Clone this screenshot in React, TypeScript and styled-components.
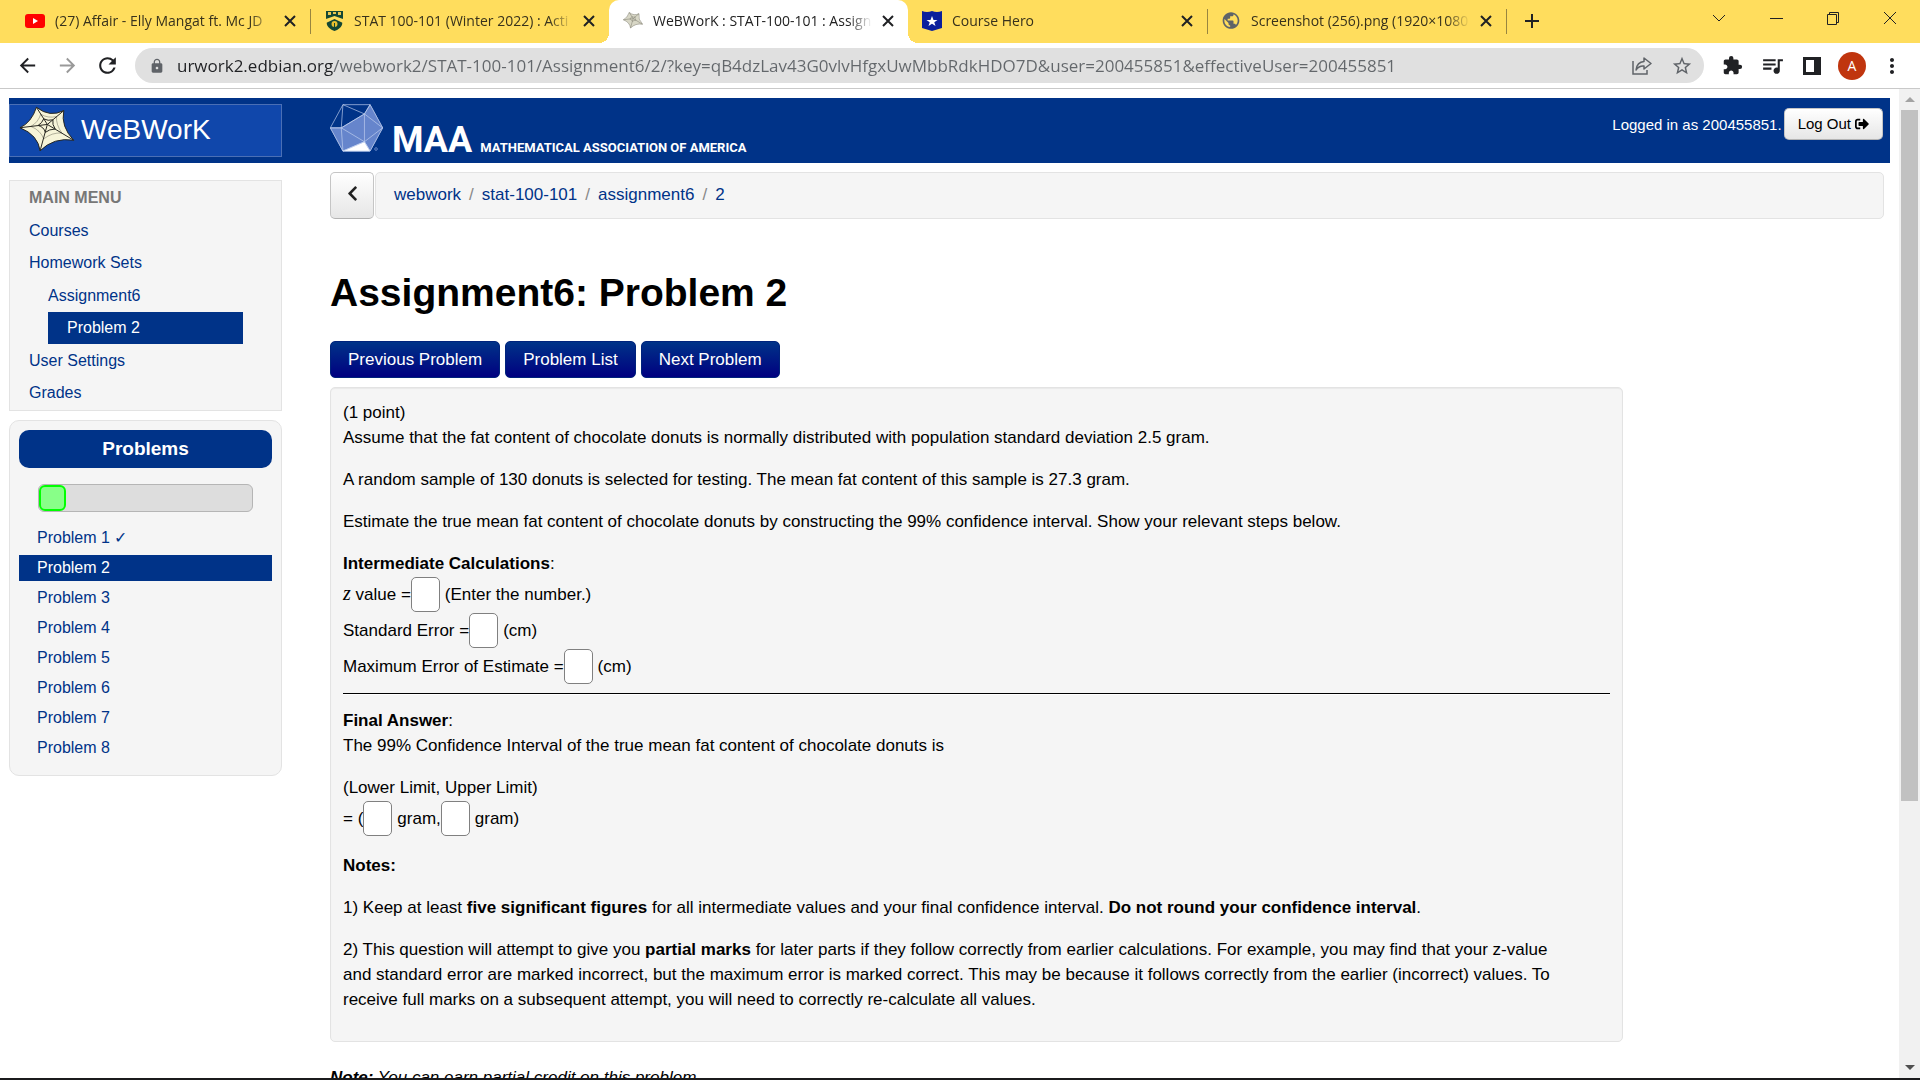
import React from "react";
import styled, { createGlobalStyle, css } from "styled-components";
import {
  MdArrowBack,
  MdArrowForward,
  MdRefresh,
  MdLock,
  MdStarBorder,
  MdExtension,
  MdQueueMusic,
  MdMoreVert,
  MdPublic,
  MdAdd,
} from "react-icons/md";
import { FaChevronLeft, FaSignOutAlt } from "react-icons/fa";

const uiFont = `"Open Sans", "Noto Sans", sans-serif`;
const pageFont = `"Liberation Sans", Arial, sans-serif`;
const navy = "#003388";

const GlobalStyle = createGlobalStyle`
  *, *::before, *::after { box-sizing: border-box; }
  body { margin: 0; background: #fff; }
  button, input { font: inherit; margin: 0; }
  a { color: ${navy}; text-decoration: none; }
  ul, ol { list-style: none; margin: 0; padding: 0; }
`;

const Window = styled.div`
  display: flex;
  flex-direction: column;
  height: 100vh;
  overflow: hidden;
  border-bottom: 2px solid #1b1b1d;
  font-family: ${pageFont};
  color: #000;
`;

/* ---------- browser chrome ---------- */

const TabStrip = styled.div`
  display: flex;
  align-items: stretch;
  height: 43px;
  flex: none;
  padding-left: 11px;
  background: #ffdd5d;
  font: 14px/20px ${uiFont};
`;

const Tab = styled.div<{ $active?: boolean; $divider?: boolean }>`
  position: relative;
  display: flex;
  align-items: center;
  flex: 0 1 299px;
  min-width: 0;
  padding: 0 10px 2px 14px;
  color: #38321c;
  ${(p) =>
    p.$divider &&
    css`
      &::after {
        content: "";
        position: absolute;
        right: -1px;
        top: 9px;
        height: 25px;
        width: 1px;
        background: #98853f;
      }
    `}
  ${(p) =>
    p.$active &&
    css`
      background: #fff;
      color: #222;
      border-radius: 10px 10px 0 0;
      &::before,
      &::after {
        content: "";
        position: absolute;
        bottom: 0;
        width: 10px;
        height: 10px;
      }
      &::before {
        left: -10px;
        background: radial-gradient(circle at 0 0, transparent 10px, #fff 10px);
      }
      &::after {
        right: -10px;
        background: radial-gradient(circle at 100% 0, transparent 10px, #fff 10px);
      }
    `}
`;

const TabIcon = styled.span`
  display: flex;
  justify-content: center;
  width: 20px;
  flex: none;
`;

const TabTitle = styled.span`
  flex: 1;
  min-width: 0;
  margin: 0 6px 0 10px;
  overflow: hidden;
  white-space: nowrap;
  mask-image: linear-gradient(90deg, #000 calc(100% - 24px), transparent);
`;

const IconButton = styled.button<{ $size?: number; $color?: string }>`
  display: flex;
  align-items: center;
  justify-content: center;
  flex: none;
  width: ${(p) => p.$size ?? 40}px;
  height: ${(p) => p.$size ?? 40}px;
  padding: 0;
  border: 0;
  background: none;
  color: ${(p) => p.$color ?? "#202124"};
`;

const NewTab = styled(IconButton)`
  margin: 1px 0 0 6px;
`;

const WindowControls = styled.div`
  display: flex;
  margin-left: auto;
  padding-right: 2px;
  height: 36px;
  button {
    width: 57px;
    height: 36px;
  }
`;

const Toolbar = styled.div`
  display: flex;
  align-items: center;
  flex: none;
  height: 46px;
  padding: 0 8px 0 7px;
  border-bottom: 1px solid #c9c9c9;
  background: #fff;
`;

const AddressBar = styled.div`
  display: flex;
  align-items: center;
  flex: 1;
  min-width: 0;
  height: 35px;
  margin: 0 8px;
  padding: 0 2px 0 14px;
  border-radius: 18px;
  background: #e0e0e0;
  color: #5f6368;
`;

const Address = styled.input`
  flex: 1;
  min-width: 0;
  height: 28px;
  margin-left: 12px;
  padding: 0;
  border: 0;
  outline: 0;
  font: 17px/28px ${uiFont};
  color: #5f6368;
  background: linear-gradient(90deg, #202124 156px, #63676b 156px);
  background-clip: text;
  -webkit-background-clip: text;
  -webkit-text-fill-color: transparent;
`;

const Avatar = styled.button`
  width: 28px;
  height: 28px;
  margin: 0 6px;
  padding: 0;
  border: 0;
  border-radius: 50%;
  background: #c0350e;
  color: #fff;
  font: 14px/28px ${uiFont};
`;

/* ---------- scrolled page ---------- */

const Viewport = styled.div`
  display: flex;
  flex: 1;
  min-height: 0;
`;

const Page = styled.div`
  flex: 1;
  min-width: 0;
  overflow: hidden;
  padding: 9px 9px 0;
`;

const Scrollbar = styled.div`
  display: flex;
  flex-direction: column;
  align-items: center;
  flex: none;
  width: 21px;
  background: #f1f1f1;
`;

const ScrollArrow = styled.button`
  display: flex;
  align-items: center;
  justify-content: center;
  flex: none;
  width: 21px;
  height: 21px;
  padding: 0;
  border: 0;
  background: none;
`;

const ScrollTrack = styled.div`
  flex: 1;
  width: 17px;
`;

const ScrollThumb = styled.div`
  height: 73%;
  background: #c1c1c1;
`;

const Masthead = styled.header`
  display: flex;
  align-items: flex-start;
  height: 65px;
  padding: 6px 7px 6px 0;
  background: ${navy};
  color: #fff;
`;

const Brand = styled.a`
  display: flex;
  align-items: center;
  gap: 6px;
  flex: none;
  width: 273px;
  height: 53px;
  padding: 0 0 2px 9px;
  border: 1px solid #4a6fb5;
  background: #1047ab;
  color: #fff;
  font-size: 28px;
  line-height: 32px;
`;

const Association = styled.a`
  display: flex;
  align-items: baseline;
  margin-left: 48px;
  color: #fff;
  font-family: Roboto, ${pageFont};
  font-weight: 700;
  line-height: 1;
  white-space: nowrap;
`;

const Acronym = styled.span`
  margin-left: 9px;
  font-size: 36px;
`;

const FullName = styled.span`
  margin-left: 8px;
  font-size: 13px;
`;

const Session = styled.div`
  display: flex;
  align-items: flex-start;
  margin: 4px 0 0 auto;
  font-size: 15px;
  line-height: 34px;
`;

const raised = css`
  border: 1px solid #c5c5c5;
  border-bottom-color: #b3b3b3;
  border-radius: 5px;
  background: linear-gradient(#fff, #e6e6e6);
  color: #222;
`;

const LogOut = styled.button`
  ${raised}
  display: flex;
  align-items: center;
  gap: 4px;
  height: 32px;
  margin-left: 2px;
  padding: 0 13px;
  font-size: 15px;
  color: #000;
`;

const Columns = styled.div`
  display: flex;
  align-items: flex-start;
  gap: 48px;
`;

const Sidebar = styled.div`
  display: flex;
  flex-direction: column;
  gap: 9px;
  flex: none;
  width: 273px;
  padding-top: 17px;
  font-size: 16px;
`;

const panel = css`
  border: 1px solid #e3e3e3;
  background: #f5f5f5;
`;

const MainMenu = styled.nav`
  ${panel}
  padding: 0 38px 1px 19px;
  line-height: 32px;
  ul ul {
    margin: 1px 0;
    padding-left: 19px;
  }
`;

const MenuHeading = styled.h2`
  margin: 0;
  font-size: 16px;
  line-height: 34px;
  color: #777;
`;

const MenuLink = styled.a<{ $current?: boolean }>`
  display: block;
  ${(p) =>
    p.$current &&
    css`
      padding-left: 19px;
      background: ${navy};
      color: #fff;
    `}
`;

const Problems = styled.nav`
  ${panel}
  padding: 9px 9px 14px;
  border-radius: 10px;
`;

const ProblemsHeading = styled.h2`
  margin: 0;
  border-radius: 10px;
  background: ${navy};
  color: #fff;
  font-size: 19px;
  line-height: 38px;
  text-align: center;
`;

const Progress = styled.div`
  height: 28px;
  margin: 16px 19px 13px;
  border: 1px solid #b5b5b5;
  border-radius: 6px;
  background: #ddd;
`;

const ProgressDone = styled.div`
  height: 26px;
  border: 2px solid #0f0;
  border-radius: 6px;
  background: #8f8;
`;

const ProblemList = styled.ol`
  display: flex;
  flex-direction: column;
  gap: 4px;
`;

const ProblemLink = styled.a<{ $current?: boolean }>`
  display: block;
  padding-left: 18px;
  line-height: 26px;
  background: ${(p) => (p.$current ? navy : "transparent")};
  color: ${(p) => (p.$current ? "#fff" : navy)};
`;

const Main = styled.main`
  flex: 1;
  min-width: 0;
  padding: 9px 6px 0 0;
  font-size: 17px;
  line-height: 25px;
`;

const PathRow = styled.div`
  display: flex;
  gap: 1px;
  height: 47px;
`;

const UpButton = styled.button`
  ${raised}
  display: flex;
  align-items: center;
  justify-content: center;
  width: 44px;
  padding: 0 0 4px;
`;

const Breadcrumb = styled.nav`
  ${panel}
  display: flex;
  flex: 1;
  gap: 8px;
  padding: 9px 18px;
  border-radius: 5px;
  span {
    color: #888;
  }
`;

const Title = styled.h1`
  margin: 49px 0 23px;
  font-size: 39px;
  line-height: 50px;
`;

const Buttons = styled.div`
  display: flex;
  gap: 5px;
`;

const NavButton = styled.button`
  height: 37px;
  padding: 0 17px;
  border: 1px solid #00237c;
  border-radius: 5px;
  background: linear-gradient(#003388, #000080);
  color: #fff;
`;

const Well = styled.section`
  ${panel}
  width: 83.2%;
  margin-top: 9px;
  padding: 12px 12px 29px;
  border-radius: 5px;
  box-shadow: inset 0 1px 1px rgba(0, 0, 0, 0.05);
`;

const Paragraph = styled.p<{ $tight?: boolean }>`
  margin: 0 0 ${(p) => (p.$tight ? 0 : 17)}px;
`;

const AnswerRow = styled.div`
  display: flex;
  align-items: center;
  height: 36px;
  white-space: pre;
`;

const Answer = styled.input`
  width: 29px;
  height: 35px;
  margin-right: 5px;
  padding: 0 4px;
  border: 1px solid #808080;
  border-radius: 5px;
  background: #fff;
`;

const MathVar = styled.i`
  font-family: "Liberation Serif", serif;
  font-size: 20px;
  line-height: 25px;
`;

const Rule = styled.hr`
  margin: 9px 0 13px;
  border: 0;
  border-top: 1px solid #000;
  border-bottom: 1px solid #fff;
`;

const Notes = styled.div`
  margin-top: 17px;
`;

const Credit = styled.p`
  margin: 23px 0 0;
  font-style: italic;
`;

/* ---------- drawings ---------- */

const WebStar = ({ width, faded }: { width: number; faded?: boolean }) => {
  const ink = faded ? "#8a897c" : "#26261f";
  return (
    <svg width={width} viewBox="54 54 170 140" fill="none" stroke={ink} strokeWidth={faded ? 5 : 3}>
      <path
        d="M57 120Q92 104 107 58Q148 90 190 68Q180 116 220 158Q160 148 118 190Q112 142 57 120Z"
        fill={faded ? "#d8d7c6" : "#f6f4d8"}
      />
      <path d="M57 120L140 110M107 58L140 110M190 68L140 110M220 158L140 110M118 190L140 110" />
      <path d="M112 113Q124 106 129 93Q142 100 157 96Q154 110 164 124Q146 124 134 134Q130 118 112 113Z" />
      {!faded && (
        <path
          d="M90 116Q112 104 120 79Q142 92 168 86Q166 110 184 136Q154 134 129 154Q120 128 90 116Z"
          strokeWidth="1"
        />
      )}
    </svg>
  );
};

const Icosahedron = () => (
  <svg width="53" height="48" viewBox="59 40 160 145" stroke="#c3d2f0" strokeWidth="2" strokeLinejoin="round">
    <path d="M60 112L98 42H180L218 112L180 182H98Z" fill={navy} />
    <path d="M60 112H93L163 70L180 42L218 112L180 182H98Z" fill="#6685cc" />
    <path d="M98 182L163 154L180 182Z" fill="#fff" />
    <path
      d="M93 112L163 70V154ZM98 42L93 112L98 182L163 154L218 112L163 70L98 42M180 42L163 70M60 112H93M163 154L180 182"
      fill="none"
    />
    <circle cx="198" cy="176" r="4" fill="none" stroke="#8ea6dc" />
  </svg>
);

const YouTubeIcon = () => (
  <svg width="20" height="14" viewBox="0 0 20 14">
    <rect width="20" height="14" rx="3" fill="#f00" />
    <path d="M8 4L13 7L8 10Z" fill="#fff" />
  </svg>
);

const CrestIcon = () => (
  <svg width="17" height="20" viewBox="0 0 17 20">
    <path d="M0 0H17V7L16 14Q14 18 8.500 20Q3 18 1 14L0 7Z" fill="#154734" />
    <path d="M0 8L8.500 5L17 8V12L8.500 8L0 12Z" fill="#ffdd5d" />
    <path d="M2 1H5V4H2ZM7 1H10V3H7ZM12 1H15V4H12Z" fill="#e9c650" />
    <circle cx="8.500" cy="13" r="3" fill="#e9c030" />
    <path d="M8.500 12V18" stroke="#154734" strokeWidth="1" />
  </svg>
);

const ShieldStarIcon = () => (
  <svg width="20" height="20" viewBox="0 0 20 20">
    <path d="M0 0Q5 2 10 0Q15 2 20 0V17L10 20L0 17Z" fill="#0a1f9c" />
    <path d="M10 5L11.5 9H15.5L12.3 11.3L13.5 15L10 12.8L6.500 15L7.700 11.300L4.500 9H8.500Z" fill="#fff" />
  </svg>
);

const stroke = { fill: "none", stroke: "currentColor" } as const;

const ShareIcon = () => (
  <svg width="20" height="18" viewBox="0 0 20 18" {...stroke} strokeWidth="1.500">
    <path d="M1 4V17H15V13" />
    <path d="M12 1L19 6.500L12 12V9Q7 8.500 4 13Q5 5 12 4.500Z" strokeLinejoin="round" />
  </svg>
);

const SidePanelIcon = () => (
  <svg width="18" height="18" viewBox="0 0 18 18">
    <path d="M0 0H18V18H0Z" fill="currentColor" />
    <path d="M3 3H11V15H3Z" fill="#fff" />
  </svg>
);

const CrossIcon = () => (
  <svg width="12" height="12" viewBox="0 0 12 12" {...stroke} strokeWidth="2">
    <path d="M1 1L11 11M11 1L1 11" />
  </svg>
);

const Glyph = ({ d }: { d: string }) => (
  <svg width="14" height="14" viewBox="0 0 14 14" {...stroke} strokeWidth="1">
    <path d={d} />
  </svg>
);

const Triangle = ({ up }: { up?: boolean }) => (
  <svg width="10" height="5" viewBox="0 0 10 5">
    <path d={up ? "M0 5L5 0L10 5Z" : "M0 0L5 5L10 0Z"} fill={up ? "#a3a3a3" : "#505050"} />
  </svg>
);

/* ---------- content ---------- */

const tabs = [
  { title: "(27) Affair - Elly Mangat ft. Mc JD", icon: <YouTubeIcon />, divider: true },
  { title: "STAT 100-101 (Winter 2022) : Acti", icon: <CrestIcon /> },
  { title: "WeBWorK : STAT-100-101 : Assign", icon: <WebStar width={20} faded />, active: true },
  { title: "Course Hero", icon: <ShieldStarIcon />, divider: true },
  { title: "Screenshot (256).png (1920×1080", icon: <MdPublic size={21} color="#5f6368" />, divider: true },
];

const controls = [
  { label: "Search tabs", d: "M1 4L7 10L13 4" },
  { label: "Minimize", d: "M1 7.500H14" },
  { label: "Restore", d: "M1.500 3.500H10.500V13.500H1.500ZM3.500 3.500V1.500H12.500V11.500H10.500" },
  { label: "Close", d: "M1 1L13 13M13 1L1 13" },
];

const crumbs = ["webwork", "stat-100-101", "assignment6", "2"];

export default function App() {
  return (
    <>
      <GlobalStyle />
      <Window>
        <TabStrip>
          {tabs.map((t) => (
            <Tab key={t.title} $active={t.active} $divider={t.divider}>
              <TabIcon>{t.icon}</TabIcon>
              <TabTitle>{t.title}</TabTitle>
              <IconButton $size={20} aria-label="Close tab">
                <CrossIcon />
              </IconButton>
            </Tab>
          ))}
          <NewTab aria-label="New tab">
            <MdAdd size={24} />
          </NewTab>
          <WindowControls>
            {controls.map((c) => (
              <IconButton key={c.label} aria-label={c.label}>
                <Glyph d={c.d} />
              </IconButton>
            ))}
          </WindowControls>
        </TabStrip>

        <Toolbar>
          <IconButton aria-label="Back"><MdArrowBack size={23} /></IconButton>
          <IconButton aria-label="Forward" $color="#999"><MdArrowForward size={23} /></IconButton>
          <IconButton aria-label="Reload"><MdRefresh size={25} /></IconButton>
          <AddressBar>
            <MdLock size={16} />
            <Address
              aria-label="Address"
              readOnly
              value="urwork2.edbian.org/webwork2/STAT-100-101/Assignment6/2/?key=qB4dzLav43G0vlvHfgxUwMbbRdkHDO7D&user=200455851&effectiveUser=200455851"
            />
            <IconButton aria-label="Share" $color="#5f6368"><ShareIcon /></IconButton>
            <IconButton aria-label="Bookmark" $color="#5f6368"><MdStarBorder size={22} /></IconButton>
          </AddressBar>
          <IconButton aria-label="Extensions"><MdExtension size={21} /></IconButton>
          <IconButton aria-label="Media"><MdQueueMusic size={25} /></IconButton>
          <IconButton aria-label="Side panel"><SidePanelIcon /></IconButton>
          <Avatar>A</Avatar>
          <IconButton aria-label="Menu"><MdMoreVert size={24} /></IconButton>
        </Toolbar>

        <Viewport>
          <Page>
            <Masthead>
              <Brand href="#">
                <WebStar width={56} />
                WeBWorK
              </Brand>
              <Association href="#">
                <Icosahedron />
                <Acronym>MAA</Acronym>
                <FullName>MATHEMATICAL ASSOCIATION OF AMERICA</FullName>
              </Association>
              <Session>
                Logged in as 200455851.
                <LogOut>
                  Log Out
                  <FaSignOutAlt size={14} />
                </LogOut>
              </Session>
            </Masthead>

            <Columns>
              <Sidebar>
                <MainMenu>
                  <MenuHeading>MAIN MENU</MenuHeading>
                  <ul>
                    <li><MenuLink href="#">Courses</MenuLink></li>
                    <li>
                      <MenuLink href="#">Homework Sets</MenuLink>
                      <ul>
                        <li><MenuLink href="#">Assignment6</MenuLink></li>
                        <li><MenuLink href="#" $current>Problem 2</MenuLink></li>
                      </ul>
                    </li>
                    <li><MenuLink href="#">User Settings</MenuLink></li>
                    <li><MenuLink href="#">Grades</MenuLink></li>
                  </ul>
                </MainMenu>
                <Problems>
                  <ProblemsHeading>Problems</ProblemsHeading>
                  <Progress role="progressbar" aria-label="Problems done" aria-valuenow={1} aria-valuemax={8}>
                    <ProgressDone style={{ width: `${100 / 8}%` }} />
                  </Progress>
                  <ProblemList>
                    {[1, 2, 3, 4, 5, 6, 7, 8].map((n) => (
                      <li key={n}>
                        <ProblemLink href="#" $current={n === 2}>
                          Problem {n}
                          {n === 1 && " ✓"}
                        </ProblemLink>
                      </li>
                    ))}
                  </ProblemList>
                </Problems>
              </Sidebar>

              <Main>
                <PathRow>
                  <UpButton aria-label="Up"><FaChevronLeft size={17} /></UpButton>
                  <Breadcrumb>
                    {crumbs.map((c, i) => (
                      <React.Fragment key={c}>
                        {i > 0 && <span>/</span>}
                        <a href="#">{c}</a>
                      </React.Fragment>
                    ))}
                  </Breadcrumb>
                </PathRow>
                <Title>Assignment6: Problem 2</Title>
                <Buttons>
                  <NavButton>Previous Problem</NavButton>
                  <NavButton>Problem List</NavButton>
                  <NavButton>Next Problem</NavButton>
                </Buttons>
                <Well>
                  <Paragraph>
                    (1 point)
                    <br />
                    Assume that the fat content of chocolate donuts is normally distributed with population standard deviation 2.5 gram.
                  </Paragraph>
                  <Paragraph>
                    A random sample of 130 donuts is selected for testing. The mean fat content of this sample is 27.3 gram.
                  </Paragraph>
                  <Paragraph>
                    Estimate the true mean fat content of chocolate donuts by constructing the 99% confidence interval. Show your relevant steps below.
                  </Paragraph>
                  <Paragraph $tight><strong>Intermediate Calculations</strong>:</Paragraph>
                  <AnswerRow>
                    <label htmlFor="z"><MathVar>z</MathVar> value =</label>
                    <Answer id="z" />
                    (Enter the number.)
                  </AnswerRow>
                  <AnswerRow>
                    <label htmlFor="se">Standard Error =</label>
                    <Answer id="se" />
                    (cm)
                  </AnswerRow>
                  <AnswerRow>
                    <label htmlFor="me">Maximum Error of Estimate =</label>
                    <Answer id="me" />
                    (cm)
                  </AnswerRow>
                  <Rule />
                  <Paragraph>
                    <strong>Final Answer</strong>:
                    <br />
                    The 99% Confidence Interval of the true mean fat content of chocolate donuts is
                  </Paragraph>
                  <Paragraph $tight>(Lower Limit, Upper Limit)</Paragraph>
                  <AnswerRow>
                    <label htmlFor="lower">= (</label>
                    <Answer id="lower" />
                    <label htmlFor="upper">gram,</label>
                    <Answer id="upper" />
                    gram)
                  </AnswerRow>
                  <Notes>
                    <Paragraph><strong>Notes:</strong></Paragraph>
                    <Paragraph>
                      1) Keep at least <strong>five significant figures</strong> for all intermediate values and your final confidence interval.{" "}
                      <strong>Do not round your confidence interval</strong>.
                    </Paragraph>
                    <Paragraph $tight>
                      2) This question will attempt to give you <strong>partial marks</strong> for later parts if they follow correctly from earlier calculations. For example, you may find that your z-value
                      <br />
                      and standard error are marked incorrect, but the maximum error is marked correct. This may be because it follows correctly from the earlier (incorrect) values. To
                      <br />
                      receive full marks on a subsequent attempt, you will need to correctly re-calculate all values.
                    </Paragraph>
                  </Notes>
                </Well>
                <Credit><strong>Note:</strong> You can earn partial credit on this problem.</Credit>
              </Main>
            </Columns>
          </Page>
          <Scrollbar>
            <ScrollArrow aria-label="Scroll up"><Triangle up /></ScrollArrow>
            <ScrollTrack><ScrollThumb /></ScrollTrack>
            <ScrollArrow aria-label="Scroll down"><Triangle /></ScrollArrow>
          </Scrollbar>
        </Viewport>
      </Window>
    </>
  );
}
